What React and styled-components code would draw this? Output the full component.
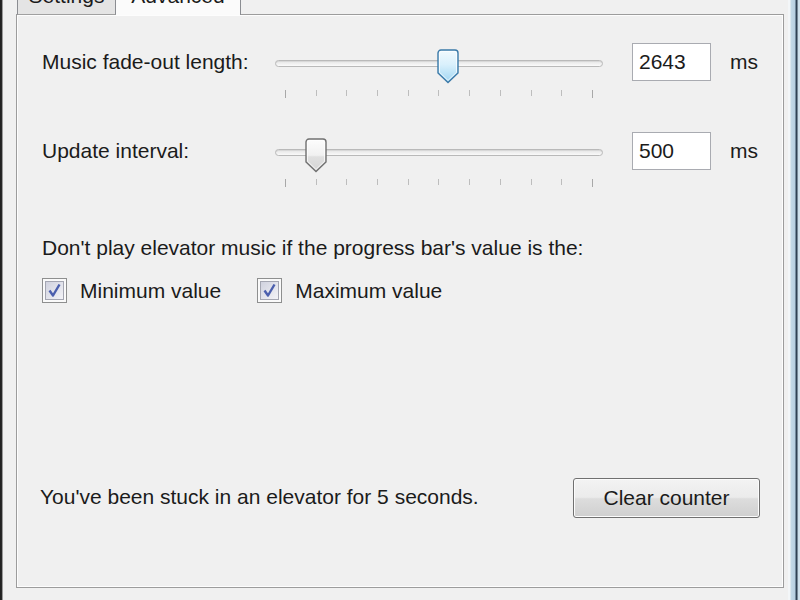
import styled, { createGlobalStyle } from "styled-components"

const GlobalStyle = createGlobalStyle`
  html, body {
    margin: 0;
    padding: 0;
    background: #f0f0f0;
  }
  body {
    font-family: "Liberation Sans", Arial, sans-serif;
    color: #1b1b1b;
  }
`

const Window = styled.div`
  width: 800px;
  height: 600px;
  display: flex;
  overflow: hidden;
  background: #f0f0f0;
`
const LeftFrame = styled.div`
  width: 3px;
  background: linear-gradient(to right, #1f1f1f 0, #2a2a2a 2px, #9a9a9a 2px, #9a9a9a 3px);
`
const RightFrame = styled.div`
  width: 12px;
  background: linear-gradient(
    to right,
    #f3f6f8 0,
    #f3f6f8 2px,
    #c4d9e8 3px,
    #b7cfe2 7px,
    #33475c 8px,
    #2a3a4c 9px,
    #c9dcea 10px,
    #d4e4ef 12px
  );
`
const Main = styled.div`
  flex: 1;
  display: flex;
  flex-direction: column;
  padding: 0 4px 12px 13px;
`
const TabStrip = styled.div`
  height: 15px;
  display: flex;
  align-items: flex-end;
  margin-bottom: -1px;
  position: relative;
  z-index: 1;
`
const Tab = styled.div`
  width: ${(p) => p.$width}px;
  height: 15px;
  margin-left: ${(p) => (p.$selected ? 0 : 1)}px;
  box-sizing: border-box;
  border: 1px solid #8b8d92;
  border-top: none;
  border-bottom: ${(p) => (p.$selected ? "none" : "1px solid #a0a0a0")};
  border-left: ${(p) => (p.$selected ? "none" : "1px solid #8b8d92")};
  background: ${(p) => (p.$selected ? "#fbfbfb" : "#e4e4e4")};
  display: flex;
  align-items: flex-end;
  justify-content: center;
  font-size: 21px;
`
const TabLabel = styled.span`
  line-height: 21px;
  margin-bottom: ${(p) => (p.$selected ? 9 : 8)}px;
  white-space: nowrap;
`
const Panel = styled.div`
  flex: 1;
  display: flex;
  flex-direction: column;
  border: 1px solid #9c9c9c;
  box-shadow: inset 0 0 0 1px #fdfdfd;
  background: #f0f0f0;
  padding: 28px 23px 69px 25px;
  font-size: 21px;
`
const SliderGroup = styled.div`
  display: flex;
  flex-direction: column;
  gap: 35px;
`
const Row = styled.div`
  display: flex;
  align-items: flex-start;
  height: 54px;
`
const Label = styled.div`
  width: 233px;
  line-height: 38px;
  white-space: nowrap;
`
const SliderBox = styled.div`
  width: 328px;
  margin-right: 29px;
  display: flex;
  flex-direction: column;
`
const TrackArea = styled.div`
  position: relative;
  height: 38px;
  display: flex;
  align-items: center;
`
const Track = styled.div`
  flex: 1;
  height: 7px;
  margin-top: 3px;
  box-sizing: border-box;
  border: 1px solid #b9b9b9;
  border-radius: 4px;
  background: linear-gradient(#e4e4e4, #fafafa);
  box-shadow: inset 0 1px 0 #d8d8d8;
`
const Thumb = styled.svg`
  position: absolute;
  top: 6px;
  width: 22px;
  height: 35px;
`
const Ticks = styled.div`
  margin-top: 9px;
  padding: 0 10px;
  display: flex;
  justify-content: space-between;
  align-items: flex-start;
`
const Tick = styled.span`
  width: 1px;
  height: ${(p) => (p.$end ? 8 : 6)}px;
  background: ${(p) => (p.$end ? "#a8a8a8" : "#bdbdbd")};
`
const ValueBox = styled.div`
  width: 79px;
  height: 38px;
  box-sizing: border-box;
  border: 1px solid #a9abb1;
  background: #fff;
  padding-left: 6px;
  line-height: 36px;
  margin-right: 19px;
`
const Unit = styled.div`
  line-height: 38px;
`
const Question = styled.div`
  margin-top: 50px;
  line-height: 24px;
  white-space: nowrap;
`
const CheckRow = styled.div`
  margin-top: 18px;
  display: flex;
  align-items: center;
  gap: 36px;
`
const CheckItem = styled.label`
  display: flex;
  align-items: center;
  gap: 13px;
  line-height: 25px;
`
const BottomRow = styled.div`
  margin-top: auto;
  display: flex;
  align-items: center;
  justify-content: space-between;
`
const Status = styled.div`
  margin-left: -2px;
  margin-top: -2px;
`
const Button = styled.button`
  width: 187px;
  height: 40px;
  box-sizing: border-box;
  border: 1px solid #707070;
  border-radius: 3px;
  background: linear-gradient(#f3f3f3 0%, #ebebeb 48%, #dddddd 52%, #cfcfcf 100%);
  box-shadow: inset 0 0 0 1px #fcfcfc;
  font-family: "Liberation Sans", Arial, sans-serif;
  font-size: 21px;
  color: #1b1b1b;
  padding: 0;
`

const MAX = 5000

const Slider = ({ value, active }) => {
  const frac = value / MAX
  const left = 10 + frac * 308 - 11
  const id = active ? "thumbBlue" : "thumbGray"
  return (
    <SliderBox>
      <TrackArea>
        <Track />
        <Thumb viewBox="0 0 22 35" style={{ left }}>
          <defs>
            <linearGradient id={id} x1="0" y1="0" x2="0" y2="1">
              {active ? (
                <>
                  <stop offset="0" stopColor="#f2fafe" />
                  <stop offset="0.45" stopColor="#d9f0fc" />
                  <stop offset="1" stopColor="#9fd5f2" />
                </>
              ) : (
                <>
                  <stop offset="0" stopColor="#fdfdfd" />
                  <stop offset="0.5" stopColor="#f1f1f1" />
                  <stop offset="0.55" stopColor="#e0e0e0" />
                  <stop offset="1" stopColor="#d4d4d4" />
                </>
              )}
            </linearGradient>
          </defs>
          <path
            d="M4 1 H18 A3 3 0 0 1 21 4 V24 L11 33.5 L1 24 V4 A3 3 0 0 1 4 1 Z"
            fill={`url(#${id})`}
            stroke={active ? "#3a79a8" : "#707070"}
            strokeWidth="1.4"
          />
          <path
            d="M4.5 2.5 H17.5 A2 2 0 0 1 19.5 4.5 V23.3 L11 31.4 L2.5 23.3 V4.5 A2 2 0 0 1 4.5 2.5 Z"
            fill="none"
            stroke="#ffffff"
            strokeOpacity="0.7"
            strokeWidth="1"
          />
        </Thumb>
      </TrackArea>
      <Ticks>
        {Array.from({ length: 11 }).map((_, i) => (
          <Tick key={i} $end={i === 0 || i === 10} />
        ))}
      </Ticks>
    </SliderBox>
  )
}

const CheckBox = () => (
  <svg width="25" height="25" viewBox="0 0 25 25">
    <defs>
      <linearGradient id="cbFill" x1="0" y1="0" x2="1" y2="1">
        <stop offset="0" stopColor="#cfd1de" />
        <stop offset="1" stopColor="#f4f4f8" />
      </linearGradient>
    </defs>
    <rect x="0.5" y="0.5" width="24" height="24" fill="#fafafa" stroke="#8e8f8f" />
    <rect x="3.5" y="3.5" width="18" height="18" fill="url(#cbFill)" stroke="#a4a6b2" />
    <path
      d="M7.5 12.5 L11 17.5 L17.5 6.5"
      fill="none"
      stroke="#4b5fae"
      strokeWidth="2.4"
      strokeLinejoin="round"
    />
  </svg>
)

const App = () => {
  return (
    <Window>
      <GlobalStyle />
      <LeftFrame />
      <Main>
        <TabStrip>
          <Tab $width={99}>
            <TabLabel>Settings</TabLabel>
          </Tab>
          <Tab $width={125} $selected>
            <TabLabel $selected>Advanced</TabLabel>
          </Tab>
        </TabStrip>
        <Panel>
          <SliderGroup>
            <Row>
              <Label>Music fade-out length:</Label>
              <Slider value={2643} active />
              <ValueBox>2643</ValueBox>
              <Unit>ms</Unit>
            </Row>
            <Row>
              <Label>Update interval:</Label>
              <Slider value={500} />
              <ValueBox>500</ValueBox>
              <Unit>ms</Unit>
            </Row>
          </SliderGroup>
          <Question>Don't play elevator music if the progress bar's value is the:</Question>
          <CheckRow>
            <CheckItem>
              <CheckBox />
              Minimum value
            </CheckItem>
            <CheckItem>
              <CheckBox />
              Maximum value
            </CheckItem>
          </CheckRow>
          <BottomRow>
            <Status>You've been stuck in an elevator for 5 seconds.</Status>
            <Button>Clear counter</Button>
          </BottomRow>
        </Panel>
      </Main>
      <RightFrame />
    </Window>
  )
}

export default App
